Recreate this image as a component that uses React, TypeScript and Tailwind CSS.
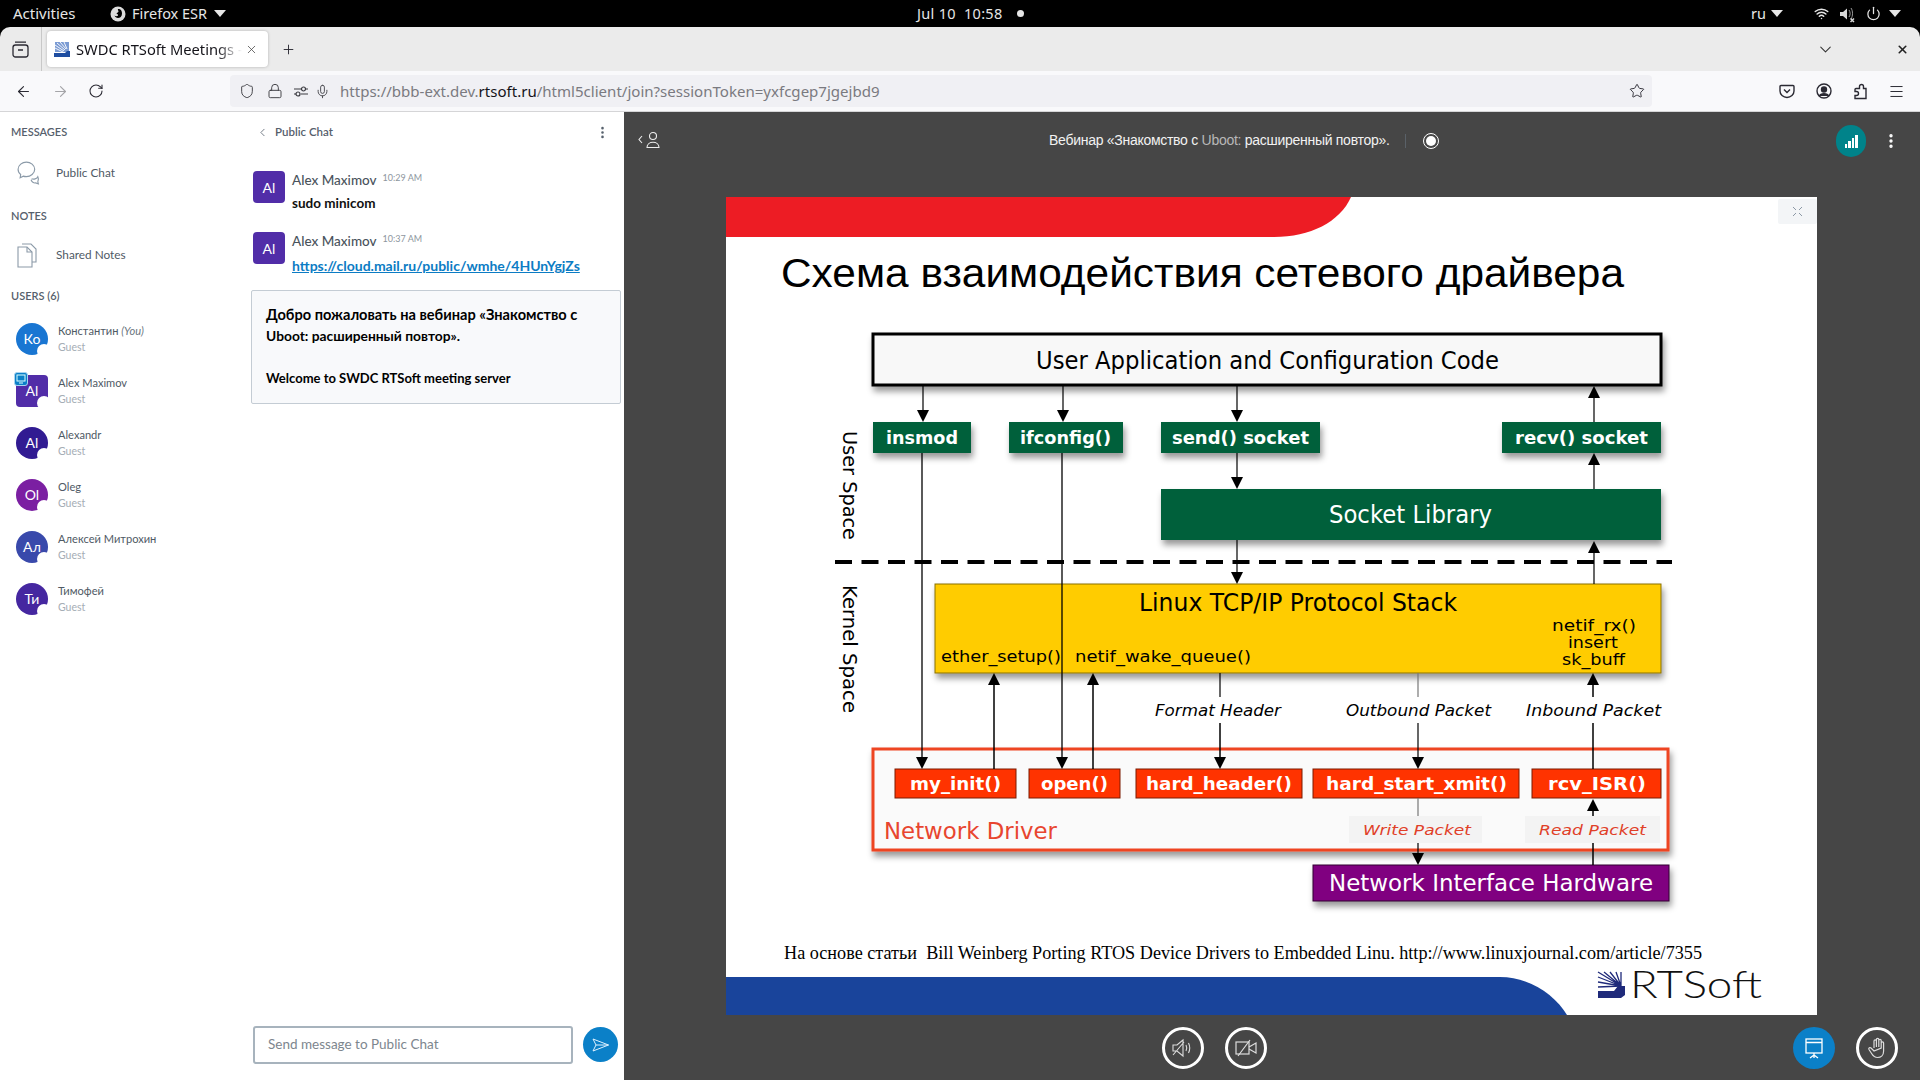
import React from "react";
import { ArrowLeft, ArrowRight, RotateCw, Lock, Mic, Star, Menu, X, Plus, ChevronDown, ChevronLeft, EllipsisVertical, Shield, Wifi, Power } from "lucide-react";

const SANS = "font-[family-name:Lato,'Noto_Sans',sans-serif]";

function Caret({ className = "" }: { className?: string }) {
  return <span className={`inline-block w-0 h-0 border-l-[6px] border-r-[6px] border-t-[7px] border-l-transparent border-r-transparent border-t-[#e8e8e8] ${className}`} />;
}

function TopBar() {
  return (
    <div className="h-[27px] bg-black text-[#e6e6e6] text-[14.5px] flex items-center font-['Noto_Sans'] shrink-0">
      <span className="ml-[13px] w-[62px] text-[15px]">Activities</span>
      <svg className="ml-[35px]" width="16" height="16" viewBox="0 0 16 16">
        <circle cx="8" cy="8" r="7.5" fill="#dcdcdc" />
        <path d="M8 3c3 0 4 2 4 4.500 0 3-2 4.500-4 4.500-1.500 0-3-1-3.500-2.500 1 1 3 1 3.500 0 .5-1-1-1.500-1.500-2 .5-1 2-1 2-2 0-1-1-1.500-.5-2.500z" fill="#000" />
      </svg>
      <span className="ml-[6px] w-[78px]">Firefox ESR</span>
      <Caret className="ml-[4px]" />
      <div className="ml-[691px] w-[100px] tracking-[0.3px] whitespace-pre">Jul 10  10:58</div>
      <span className="w-[7px] h-[7px] rounded-full bg-[#e6e6e6]" />
      <span className="ml-[727px] w-[14px]">ru</span>
      <Caret className="ml-[6px]" />
      <Wifi className="ml-[31px]" size={15} strokeWidth={2.4} color="#e6e6e6" />
      <svg className="ml-[9px]" width="18" height="18" viewBox="0 0 18 18" fill="none" stroke="#d8d8d8">
        <path d="M2 7h3l4-3.500v11L5 11H2z" fill="#d8d8d8" stroke="none" />
        <path d="M11 5c1.500 2 1.500 5 0 7M13 3c2 3 2 8 0 11" strokeWidth="1" opacity=".7" />
        <path d="M12.500 13.500l3.500 3.500M16 13.500L12.500 17" strokeWidth="1.500" />
      </svg>
      <Power className="ml-[10px]" size={15} strokeWidth={2} color="#e6e6e6" />
      <Caret className="ml-[8px]" />
    </div>
  );
}

function Favicon() {
  return (
    <svg width="16" height="17" viewBox="0 0 16 17">
      <path d="M1 1h14v10H1z" fill="#7b9bd3" />
      <path d="M3 2l8 7M6 1l6 7M10 1l3 7M1 4l9 6M1 7l8 4" stroke="#fff" strokeWidth=".9" />
      <path d="M0 12h11l2-2h3v6H0z" fill="#1e4da1" />
    </svg>
  );
}

function TabStrip() {
  return (
    <div className="h-[44px] bg-[#ebebeb] rounded-t-[10px] flex items-center relative shrink-0 font-['Noto_Sans']">
      <div className="w-[42px] h-full flex items-center justify-center border-r border-[#c8c8c8]">
        <svg width="17" height="17" viewBox="0 0 17 17" fill="none" stroke="#2b2a33" strokeWidth="1.300">
          <rect x="1" y="4" width="15" height="12" rx="2.500" />
          <path d="M3 1.200h11M6 9h5" />
        </svg>
      </div>
      <div className="ml-[5px] w-[221px] h-[36px] bg-white rounded-[4px] shadow-[0_0_3px_rgba(0,0,0,0.25)] flex items-center pl-[7px]">
        <Favicon />
        <span className="ml-[6px] w-[166px] overflow-hidden whitespace-nowrap text-[14.7px] text-[#15141a] [mask-image:linear-gradient(to_right,black_85%,transparent)]">SWDC RTSoft Meetings - Mozilla</span>
        <X className="ml-[3px]" size={13} color="#444" strokeWidth={1.400} />
      </div>
      <Plus className="ml-[13px]" size={15} color="#2b2a33" strokeWidth={1.500} />
      <div className="flex-1" />
      <ChevronDown size={19} color="#333" strokeWidth={1.300} />
      <X className="ml-[61px] mr-[11px]" size={13} color="#222" strokeWidth={3} />
    </div>
  );
}

function ToolBar() {
  return (
    <div className="h-[41px] bg-[#f9f9fb] border-b border-[#d5d5d7] flex items-center shrink-0 font-['Noto_Sans']">
      <ArrowLeft className="ml-[15px]" size={17} color="#2b2a33" strokeWidth={1.600} />
      <ArrowRight className="ml-[20px]" size={17} color="#a5a5a8" strokeWidth={1.600} />
      <RotateCw className="ml-[19px]" size={16} color="#2b2a33" strokeWidth={1.600} />
      <div className="ml-[126px] w-[1422px] h-[32px] bg-[#f0f0f4] rounded-[4px] flex items-center pl-[9px]">
        <Shield size={16} color="#3a3a40" strokeWidth={1.400} />
        <Lock className="ml-[12px]" size={16} color="#3a3a40" strokeWidth={1.400} />
        <svg className="ml-[11px]" width="14" height="14" viewBox="0 0 14 14" fill="none" stroke="#3a3a40" strokeWidth="1.200">
          <path d="M0 5h7M12 5h2M0 10h2M7 10h7" />
          <circle cx="9.500" cy="5" r="2" />
          <circle cx="4" cy="10" r="2" />
        </svg>
        <Mic className="ml-[7px]" size={15} color="#3a3a40" strokeWidth={1.400} />
        <span className="ml-[10px] text-[15.05px] text-[#7a7a80] whitespace-nowrap">https://bbb-ext.dev.<span className="text-[#15141a]">rtsoft.ru</span>/html5client/join?sessionToken=yxfcgep7jgejbd9</span>
        <div className="flex-1" />
        <Star className="mr-[7px]" size={16} color="#2b2a33" strokeWidth={1.400} />
      </div>
      <svg className="ml-[127px]" width="16" height="16" viewBox="0 0 16 16" fill="none" stroke="#2b2a33" strokeWidth="1.400">
        <path d="M2 2.500h12c.6 0 1 .4 1 1V8a7 6.500 0 0 1-14 0V3.500c0-.6.4-1 1-1z" />
        <path d="M5 6.500l3 3 3-3" />
      </svg>
      <svg className="ml-[21px]" width="16" height="16" viewBox="0 0 16 16" fill="none" stroke="#2b2a33" strokeWidth="1.400">
        <circle cx="8" cy="8" r="7" />
        <circle cx="8" cy="6.500" r="2.500" fill="#2b2a33" />
        <path d="M3.500 13c1-3 8-3 9 0" fill="#2b2a33" />
      </svg>
      <svg className="ml-[20px]" width="17" height="17" viewBox="0 0 17 17" fill="none" stroke="#2b2a33" strokeWidth="1.400">
        <path d="M4 5.500h3.500V3.500a2 2 0 0 1 4 0v2H14v10H3v-3h1.500a2 2 0 0 0 0-4H3V6.500c0-.5.5-1 1-1z" />
      </svg>
      <Menu className="ml-[19px]" size={17} color="#2b2a33" strokeWidth={1.400} />
    </div>
  );
}

function SectionTitle({ children, className = "" }: { children: React.ReactNode; className?: string }) {
  return <div className={`pl-[11px] text-[11px] font-semibold text-[#56606c] leading-[14px] ${className}`}>{children}</div>;
}

const users = [
  { i: "Ко", n: "Константин", you: true, c: "bg-[#1976d2]", sq: false },
  { i: "Al", n: "Alex Maximov", you: false, c: "bg-[#512da8]", sq: true },
  { i: "Al", n: "Alexandr", you: false, c: "bg-[#311b92]", sq: false },
  { i: "Ol", n: "Oleg", you: false, c: "bg-[#7b1fa2]", sq: false },
  { i: "Ал", n: "Алексей Митрохин", you: false, c: "bg-[#3949ab]", sq: false },
  { i: "Ти", n: "Тимофей", you: false, c: "bg-[#4527a0]", sq: false },
];

function UserRow({ u }: { u: (typeof users)[number] }) {
  return (
    <div className="h-[52px] flex items-start pl-[16px] pt-[1px]">
      <div className={`relative w-[32px] h-[32px] pb-[2px] overflow-visible ${u.c} ${u.sq ? "rounded-[4px]" : "rounded-full"} flex items-center justify-center text-white text-[14px]`}>
        {u.i}
        <span className="absolute -right-[3px] -bottom-[3px] w-[14px] h-[14px] rounded-full bg-white" />
        {u.sq && (
          <span className="absolute -left-[2px] -top-[3px] w-[14px] h-[14px] rounded-[3px] bg-[#0b80c8] border border-[#a8d4f0] flex items-center justify-center">
            <svg width="10" height="10" viewBox="0 0 10 10" fill="none" stroke="#dff" strokeWidth="1"><rect x="1" y="1" width="8" height="6" /><path d="M3 9h4" /></svg>
          </span>
        )}
      </div>
      <div className="ml-[10px]">
        <div className="text-[11.1px] text-[#4f5a65] leading-[16px]">
          {u.n} {u.you && <i className="text-[#6b7680]">(You)</i>}
        </div>
        <div className="text-[10.5px] text-[#a5adb5] leading-[16px]">Guest</div>
      </div>
    </div>
  );
}

function UsersPanel() {
  return (
    <div className="w-[245px] shrink-0 bg-white pt-[13px]">
      <SectionTitle>MESSAGES</SectionTitle>
      <div className="mt-[21px] h-[26px] flex items-center pl-[16px]">
        <svg width="26" height="26" viewBox="0 0 25 25" fill="none" stroke="#8b9aa8" strokeWidth="1.100">
          <path d="M2 9c0-4 4-7 8-7s8 3 8 7-4 7-8 7c-1 0-2 0-3-.5L4 17l.5-3C3 13 2 11 2 9z" />
          <path d="M15 18c2 1 5 0 6-2 1 2 .5 4 0 5l.5 2-2.500-1c-2 .5-4-1-4.500-3" />
        </svg>
        <span className="ml-[14px] text-[11.8px] text-[#4f5a65]">Public Chat</span>
      </div>
      <SectionTitle className="mt-[23px]">NOTES</SectionTitle>
      <div className="mt-[19px] h-[26px] flex items-center pl-[17px]">
        <svg width="20" height="26" viewBox="0 0 20 26" fill="none" stroke="#8b9aa8" strokeWidth="1.100">
          <path d="M5 2h9l5 5v13h-4" />
          <path d="M1 5h9l5 5v15H1z" />
          <path d="M10 5v5h5" />
        </svg>
        <span className="ml-[19px] text-[11.8px] text-[#4f5a65]">Shared Notes</span>
      </div>
      <SectionTitle className="mt-[21px]">USERS (6)</SectionTitle>
      <div className="mt-[19px]">
        {users.map((u, k) => <UserRow key={k} u={u} />)}
      </div>
    </div>
  );
}

function Message({ time, gap, children }: { time: string; gap: string; children: React.ReactNode }) {
  return (
    <div className="flex h-[61px] pl-[8px]">
      <div className="w-[32px] h-[32px] rounded-[4px] bg-[#512da8] text-white text-[14px] flex items-center justify-center">Al</div>
      <div className="ml-[7px]">
        <div className="flex items-start h-[20px]">
          <span className="text-[13.500px] leading-[18px] text-[#4a535c] font-medium">Alex Maximov</span>
          <span className="ml-[6px] mt-[1px] text-[9px] leading-[12px] text-[#8d969e]">{time}</span>
        </div>
        <div className={`${gap} leading-[20px]`}>{children}</div>
      </div>
    </div>
  );
}

function ChatPanel() {
  return (
    <div className="w-[379px] shrink-0 bg-white flex flex-col relative">
      <div className="h-[40px] flex items-center pl-[11px] shrink-0">
        <ChevronLeft size={13} color="#56606c" strokeWidth={1.500} />
        <span className="ml-[6px] text-[11.5px] font-semibold text-[#56606c]">Public Chat</span>
        <div className="flex-1" />
        <EllipsisVertical className="mr-[14px]" size={15} color="#56606c" strokeWidth={2.200} />
      </div>
      <div className="pt-[19px]">
        <Message time="10:29 AM" gap="mt-[1px]"><span className="text-[13.500px] font-bold text-[#111]">sudo minicom</span></Message>
        <Message time="10:37 AM" gap="mt-[3px]"><span className="text-[14px] font-bold text-[#0c7cc4] underline">https://cloud.mail.ru/public/wmhe/4HUnYgjZs</span></Message>
      </div>
      <div className="ml-[6px] w-[370px] h-[114px] -mt-[3px] bg-[#f8f9fb] border border-[#c4ccd4] rounded-[2px] pl-[14px] pt-[13px] font-bold text-black leading-[21px]">
        <div className="text-[14.6px] whitespace-nowrap">Добро пожаловать на вебинар «Знакомство с</div>
        <div className="text-[13.800px]">Uboot: расширенный повтор».</div>
        <div className="mt-[22px] text-[13px]">Welcome to SWDC RTSoft meeting server</div>
      </div>
      <div className="flex-1" />
      <div className="h-[55px] mb-[8px] pl-[8px] flex items-center shrink-0">
        <div className="w-[320px] h-[38px] border-2 border-[#a7b3bd] rounded-[3px] pl-[13px] flex items-center text-[13.500px] text-[#7d868e]">Send message to Public Chat</div>
        <div className="ml-[10px] w-[35px] h-[35px] rounded-full bg-[#0b80c8] flex items-center justify-center">
          <svg width="18" height="14" viewBox="0 0 18 14" fill="none" stroke="#dff1ff" strokeWidth="1"><path d="M1 1l15.500 6L1 13l3-6zM4 7h12.500" /></svg>
        </div>
      </div>
    </div>
  );
}

const ARROW = "#000";
function Down({ x, y1, y2, c = ARROW, w = 1.200 }: { x: number; y1: number; y2: number; c?: string; w?: number }) {
  return (
    <g>
      <line x1={x} x2={x} y1={y1} y2={y2 - 8} stroke={c} strokeWidth={w} />
      <path d={`M${x - 6} ${y2 - 12}H${x + 6}L${x} ${y2}z`} fill="#000" />
    </g>
  );
}
function Up({ x, y1, y2, w = 1.200 }: { x: number; y1: number; y2: number; w?: number }) {
  return (
    <g>
      <line x1={x} x2={x} y1={y1} y2={y2 + 8} stroke="#000" strokeWidth={w} />
      <path d={`M${x - 6} ${y2 + 12}H${x + 6}L${x} ${y2}z`} fill="#000" />
    </g>
  );
}
function T({ x, y, len, size, children, fill = "#000", weight = 400, italic = false, family = "'DejaVu Sans'" }: { x: number; y: number; len: number; size: number; children: React.ReactNode; fill?: string; weight?: number; italic?: boolean; family?: string }) {
  return (
    <text x={x} y={y} textLength={len} lengthAdjust="spacingAndGlyphs" fontSize={size} fill={fill} fontWeight={weight} fontStyle={italic ? "italic" : "normal"} fontFamily={family}>
      {children}
    </text>
  );
}

function Slide() {
  const green = "#00603a";
  const red = "#ff3300";
  return (
    <svg className="block shrink-0" width="1091" height="818" viewBox="726 197 1091 818">
      <defs>
        <filter id="sh" x="-10%" y="-20%" width="125%" height="160%">
          <feDropShadow dx="2" dy="5" stdDeviation="3" floodColor="#000" floodOpacity="0.4" />
        </filter>
      </defs>
      <rect x="726" y="197" width="1091" height="818" fill="#fff" />
      <path d="M726 197H1351C1340 222 1310 237 1274 237H726z" fill="#ed1c24" />
      <T x={781} y={287} len={843} size={41} family="'Liberation Sans'">Схема взаимодействия сетевого драйвера</T>

      <rect x="873" y="334" width="788" height="51" fill="#f8f8f8" stroke="#000" strokeWidth="3" filter="url(#sh)" />
      <T x={1036} y={369} len={463} size={24}>User Application and Configuration Code</T>

      <Down x={923} y1={386} y2={422} />
      <Down x={1063} y1={386} y2={422} />
      <Down x={1237} y1={386} y2={422} />
      <Up x={1594} y1={422} y2={386} />

      <g filter="url(#sh)" fill={green}>
        <rect x="873" y="422" width="98" height="31" />
        <rect x="1009" y="422" width="114" height="31" />
        <rect x="1161" y="422" width="159" height="31" />
        <rect x="1502" y="422" width="159" height="31" />
        <rect x="1161" y="489" width="500" height="51" />
      </g>
      <T x={886} y={444} len={72} size={18} fill="#fff" weight={700}>insmod</T>
      <T x={1020} y={444} len={91} size={18} fill="#fff" weight={700}>ifconfig()</T>
      <T x={1172} y={444} len={137} size={18} fill="#fff" weight={700}>send() socket</T>
      <T x={1515} y={444} len={133} size={18} fill="#fff" weight={700}>recv() socket</T>
      <T x={1329} y={523} len={163} size={24} fill="#fff">Socket Library</T>

      <Down x={1237} y1={453} y2={489} />
      <Up x={1594} y1={489} y2={453} />

      <text transform="translate(843 431) rotate(90)" textLength={109} lengthAdjust="spacingAndGlyphs" fontSize="20" fontFamily="'DejaVu Sans'">User Space</text>
      <text transform="translate(843 585) rotate(90)" textLength={128} lengthAdjust="spacingAndGlyphs" fontSize="20" fontFamily="'DejaVu Sans'">Kernel Space</text>

      <rect x="935" y="584" width="726" height="89" fill="#ffcc00" stroke="#8a7000" strokeWidth="1" filter="url(#sh)" />
      <T x={1139} y={611} len={318} size={24}>Linux TCP/IP Protocol Stack</T>
      <T x={941} y={662} len={120} size={15} weight={500}>ether_setup()</T>
      <T x={1075} y={662} len={176} size={15} weight={500}>netif_wake_queue()</T>
      <T x={1552} y={631} len={84} size={15}>netif_rx()</T>
      <T x={1568} y={648} len={50} size={15}>insert</T>
      <T x={1562} y={665} len={63} size={15}>sk_buff</T>

      <line x1="835" x2="1672" y1="562" y2="562" stroke="#000" strokeWidth="4" strokeDasharray="17 9.500" />
      <Down x={1237} y1={540} y2={584} />
      <line x1="1594" x2="1594" y1="584" y2="550" stroke="#000" strokeWidth="1.200" />
      <path d="M1588 553H1600L1594 541z" fill="#000" />

      <rect x="873" y="749" width="795" height="101" fill="#fafafa" stroke="#ee4422" strokeWidth="3" filter="url(#sh)" />
      <rect x="1349" y="816" width="133" height="27" fill="#f3f3f3" />
      <rect x="1525" y="816" width="135" height="27" fill="#f3f3f3" />
      <rect x="1313" y="865" width="356" height="36" fill="#800080" stroke="#300030" filter="url(#sh)" />

      <g fill={red} stroke="#7a1a00" strokeWidth="1">
        <rect x="895" y="769" width="121" height="29" />
        <rect x="1029" y="769" width="91" height="29" />
        <rect x="1136" y="769" width="166" height="29" />
        <rect x="1313" y="769" width="206" height="29" />
        <rect x="1532" y="769" width="129" height="29" />
      </g>

      <line x1="922" x2="922" y1="453" y2="760" stroke="#000" strokeWidth="1.300" />
      <path d="M916 757H928L922 769z" fill="#000" />
      <line x1="1062" x2="1062" y1="453" y2="760" stroke="#000" strokeWidth="1.300" />
      <path d="M1056 757H1068L1062 769z" fill="#000" />
      <Up x={994} y1={769} y2={673} w={1.500} />
      <Up x={1093} y1={769} y2={673} w={1.500} />

      <line x1="1220" x2="1220" y1="673" y2="697" stroke="#000" strokeWidth="1.200" />
      <Down x={1220} y1={723} y2={769} w={1.500} />
      <line x1="1418" x2="1418" y1="673" y2="697" stroke="#777" strokeWidth="1.200" />
      <Down x={1418} y1={723} y2={769} w={1.200} />
      <line x1="1593" x2="1593" y1="697" y2="684" stroke="#000" strokeWidth="1.500" />
      <path d="M1587 685H1599L1593 673z" fill="#000" />
      <line x1="1593" x2="1593" y1="723" y2="769" stroke="#000" strokeWidth="1.500" />

      <T x={1155} y={716} len={126} size={15} italic>Format Header</T>
      <T x={1346} y={716} len={145} size={15} italic>Outbound Packet</T>
      <T x={1526} y={716} len={135} size={15} italic>Inbound Packet</T>

      <T x={910} y={790} len={91} size={18} fill="#fff" weight={700}>my_init()</T>
      <T x={1041} y={790} len={67} size={18} fill="#fff" weight={700}>open()</T>
      <T x={1146} y={790} len={146} size={18} fill="#fff" weight={700}>hard_header()</T>
      <T x={1326} y={790} len={181} size={18} fill="#fff" weight={700}>hard_start_xmit()</T>
      <T x={1548} y={790} len={98} size={18} fill="#fff" weight={700}>rcv_ISR()</T>

      <line x1="1418" x2="1418" y1="798" y2="816" stroke="#777" strokeWidth="1.200" />
      <Down x={1418} y1={843} y2={865} />
      <line x1="1593" x2="1593" y1="843" y2="865" stroke="#000" strokeWidth="1.500" />
      <Up x={1593} y1={816} y2={799} w={1.500} />

      <T x={884} y={839} len={173} size={23} fill="#e8452f">Network Driver</T>
      <T x={1363} y={835} len={108} size={14.500} fill="#e04028" italic>Write Packet</T>
      <T x={1539} y={835} len={107} size={14.500} fill="#e04028" italic>Read Packet</T>
      <T x={1329} y={891} len={324} size={23.500} fill="#fff">Network Interface Hardware</T>

      <T x={784} y={959} len={918} size={18.500} family="'Liberation Serif'">{"На основе статьи\u00a0\u00a0Bill Weinberg Porting RTOS Device Drivers to Embedded Linu. http://www.linuxjournal.com/article/7355"}</T>

      <path d="M726 977H1500C1530 977 1555 995 1567 1015H726z" fill="#19449b" />

      <g stroke="#1f2a7a" strokeWidth="1.300">
        <path d="M1621 986L1598 972M1621 986L1604 972M1621 986L1610 972M1621 986L1616 972M1621 986L1621 972M1621 986L1598 977M1621 986L1598 982M1621 986L1598 987" />
      </g>
      <path d="M1598 991H1614L1618 986H1625V995L1621 998H1598z" fill="#1f2a7a" />
      <text x="1630" y="998" textLength={132} lengthAdjust="spacingAndGlyphs" fontSize="38" fontWeight="300" fontFamily="Lato, 'Liberation Sans'" fill="#111">RTSoft</text>

      <rect x="1778" y="199" width="39" height="25" rx="2" fill="#f3f5f7" />
      <path d="M1793 207l3 3M1802 207l-3 3M1793 216l3-3M1802 216l-3-3" stroke="#8b98a5" strokeWidth="1" />
    </svg>
  );
}

function RoundBtn({ children, active = false }: { children: React.ReactNode; active?: boolean }) {
  return (
    <div className={`w-[42px] h-[42px] rounded-full flex items-center justify-center ${active ? "bg-[#0b80c8]" : "border-[3px] border-white"}`}>{children}</div>
  );
}

function Presentation() {
  return (
    <div className="flex-1 min-w-0 bg-[#464646] flex flex-col">
      <div className="h-[85px] shrink-0 flex items-start relative">
        <div className="flex items-center pt-[19px] pl-[14px]">
          <svg width="24" height="18" viewBox="0 0 24 18" fill="none" stroke="#eee" strokeWidth="1.100">
            <path d="M4 5L1 8.500 4 12" />
            <circle cx="15" cy="5" r="3.500" />
            <path d="M9 16.500c0-7 12-7 12 0z" />
          </svg>
        </div>
        <div className="ml-[387px] pt-[19px] flex items-center h-[38px] whitespace-nowrap">
          <span className="text-[14px] text-[#f2f2f2] font-['Liberation_Sans'] tracking-[-0.28px]">Вебинар «Знакомство с <span className="text-[#b8b8b8]">Uboot:</span> расширенный повтор».</span>
          <span className="ml-[15px] w-px h-[14px] bg-[#5a6168]" />
          <span className="ml-[17px] w-[16px] h-[16px] rounded-full border border-white flex items-center justify-center">
            <span className="w-[10px] h-[10px] rounded-full bg-white" />
          </span>
        </div>
        <div className="flex-1" />
        <div className="mt-[13px] w-[30px] h-[32px] rounded-full bg-[#00838a] flex items-end justify-center pb-[9px] gap-[1px]">
          <span className="w-[2.500px] h-[4px] bg-white" />
          <span className="w-[2.500px] h-[7px] bg-white" />
          <span className="w-[2.500px] h-[10px] bg-white" />
          <span className="w-[2.500px] h-[13px] bg-white" />
        </div>
        <EllipsisVertical className="mt-[20px] ml-[16px] mr-[20px]" size={18} color="#fff" strokeWidth={2.500} />
      </div>
      <div className="flex shrink-0 pl-[102px]">
        <Slide />
      </div>
      <div className="flex-1 relative flex items-start pt-[12px]">
        <div className="ml-[538px] flex gap-[21px]">
          <RoundBtn>
            <svg width="22" height="20" viewBox="0 0 22 20" fill="none" stroke="#ddd" strokeWidth="1.100">
              <path d="M1 7h4l6-5v16l-6-5H1zM1 17L12 4" />
              <path d="M14 7c1 2 1 4 0 6M16.500 5c1.500 3 1.500 7 0 10" />
            </svg>
          </RoundBtn>
          <RoundBtn>
            <svg width="22" height="18" viewBox="0 0 22 18" fill="none" stroke="#ddd" strokeWidth="1.200">
              <rect x="1" y="3" width="13" height="12" />
              <path d="M14 8l7-4v10l-7-4M3 17L15 1" />
            </svg>
          </RoundBtn>
        </div>
        <div className="ml-[526px] flex gap-[21px]">
          <RoundBtn active>
            <svg width="20" height="21" viewBox="0 0 20 21" fill="none" stroke="#fff" strokeWidth="1.300">
              <rect x="2" y="1" width="16" height="14" />
              <path d="M2 4.500h16M10 15v2M10 17l-4 3M10 17l4 3M10 17v3" />
            </svg>
          </RoundBtn>
          <RoundBtn>
            <svg width="20" height="22" viewBox="0 0 20 22" fill="none" stroke="#ddd" strokeWidth="1.200">
              <path d="M7 11V4a1.200 1.200 0 0 1 2.400 0V10M9.400 10V2.500a1.200 1.200 0 0 1 2.400 0V10M11.800 10V3.500a1.200 1.200 0 0 1 2.400 0V11M14.200 11V6a1.200 1.200 0 0 1 2.400 0v8c0 4-2.500 6.500-6 6.500-3 0-4.500-1.500-6-4L2 12.500c-.8-1.500 1-2.500 2-1.500l3 3z" />
            </svg>
          </RoundBtn>
        </div>
      </div>
    </div>
  );
}

export default function App() {
  return (
    <div className={`w-[1920px] h-[1080px] overflow-hidden flex flex-col bg-black ${SANS}`}>
      <TopBar />
      <TabStrip />
      <ToolBar />
      <div className="flex-1 flex min-h-0">
        <UsersPanel />
        <ChatPanel />
        <Presentation />
      </div>
    </div>
  );
}
